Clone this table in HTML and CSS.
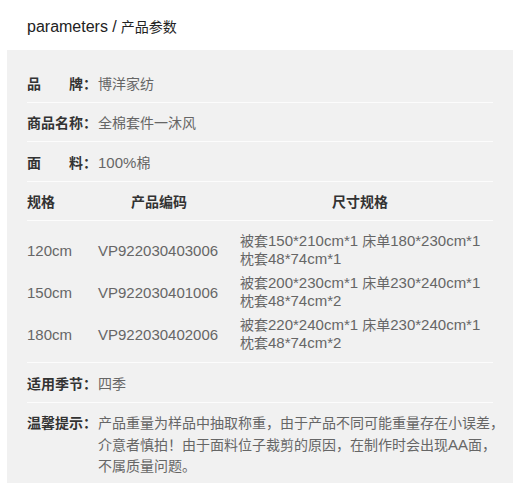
FILE: index.html
```html
<!DOCTYPE html>
<html lang="zh">
<head>
<meta charset="utf-8">
<title>parameters / 产品参数</title>
<link rel="stylesheet" href="styles.css">
</head>
<body>
<div class="title"><span class="en">parameters /</span> 产品参数</div>
<div class="panel">
  <div class="row r40"><span class="label">品　　牌：</span><span class="value">博洋家纺</span></div>
  <div class="row r39"><span class="label">商品名称：</span><span class="value">全棉套件一沐风</span></div>
  <div class="row r40"><span class="label">面　　料：</span><span class="value"><span class="n">100%</span>棉</span></div>
  <div class="thead">
    <div class="c1">规格</div>
    <div class="c2">产品编码</div>
    <div class="c3">尺寸规格</div>
  </div>
  <div class="tbody">
    <div class="trow">
      <div class="c1 n">120cm</div>
      <div class="c2 n">VP922030403006</div>
      <div class="c3">被套<span class="n">150*210cm*1 </span>床单<span class="n">180*230cm*1</span><br>枕套<span class="n">48*74cm*1</span></div>
    </div>
    <div class="trow">
      <div class="c1 n">150cm</div>
      <div class="c2 n">VP922030401006</div>
      <div class="c3">被套<span class="n">200*230cm*1 </span>床单<span class="n">230*240cm*1</span><br>枕套<span class="n">48*74cm*2</span></div>
    </div>
    <div class="trow">
      <div class="c1 n">180cm</div>
      <div class="c2 n">VP922030402006</div>
      <div class="c3">被套<span class="n">220*240cm*1 </span>床单<span class="n">230*240cm*1</span><br>枕套<span class="n">48*74cm*2</span></div>
    </div>
  </div>
  <div class="row r40"><span class="label">适用季节：</span><span class="value">四季</span></div>
  <div class="tip"><span class="label">温馨提示：</span><span class="value tiptext">产品重量为样品中抽取称重，由于产品不同可能重量存在小误差，<br>介意者慎拍！由于面料位子裁剪的原因，在制作时会出现<span class="n">AA</span>面，<br>不属质量问题。</span></div>
</div>
</body>
</html>
```
FILE: styles.css
```css
body {
  margin: 0;
  background: #ffffff;
  font-family: "Liberation Sans", "Noto Sans CJK SC", sans-serif;
  color: #333333;
}

.title {
  height: 50px;
  box-sizing: border-box;
  padding: 17px 0 0 27px;
  font-size: 14px;
  line-height: 20px;
  color: #222222;
}

.title .en {
  font-size: 16px;
}

.panel {
  margin-left: 7px;
  width: 506px;
  box-sizing: border-box;
  background: #f1f1f1;
  padding: 13px 20px 6px 20px;
}

.row {
  display: flex;
  align-items: center;
  box-sizing: border-box;
  border-bottom: 1px solid #fcfcfc;
  font-size: 14px;
}

.r40 { height: 40px; }
.r39 { height: 39px; }

.label {
  flex: none;
  width: 71px;
  font-weight: bold;
  color: #333333;
  white-space: nowrap;
}

.value {
  color: #666666;
}

.n {
  font-size: 15px;
}

.thead,
.trow {
  display: grid;
  grid-template-columns: 71px 122px 1fr;
  align-items: center;
}

.thead {
  height: 39px;
  box-sizing: border-box;
  border-bottom: 1px solid #fcfcfc;
  font-size: 14px;
  font-weight: bold;
  color: #333333;
}

.thead .c2,
.thead .c3 {
  text-align: center;
}

.c3 {
  padding: 0 13px 0 20px;
  white-space: nowrap;
}

.tbody {
  padding: 8px 0 7px;
  border-bottom: 1px solid #fcfcfc;
}

.trow {
  height: 42px;
  font-size: 14px;
  color: #666666;
}

.trow .c3 {
  line-height: 17px;
}

.tip {
  display: flex;
  align-items: flex-start;
  padding-top: 10px;
  font-size: 14px;
  line-height: 21px;
}

.tiptext {
  white-space: nowrap;
}
```
